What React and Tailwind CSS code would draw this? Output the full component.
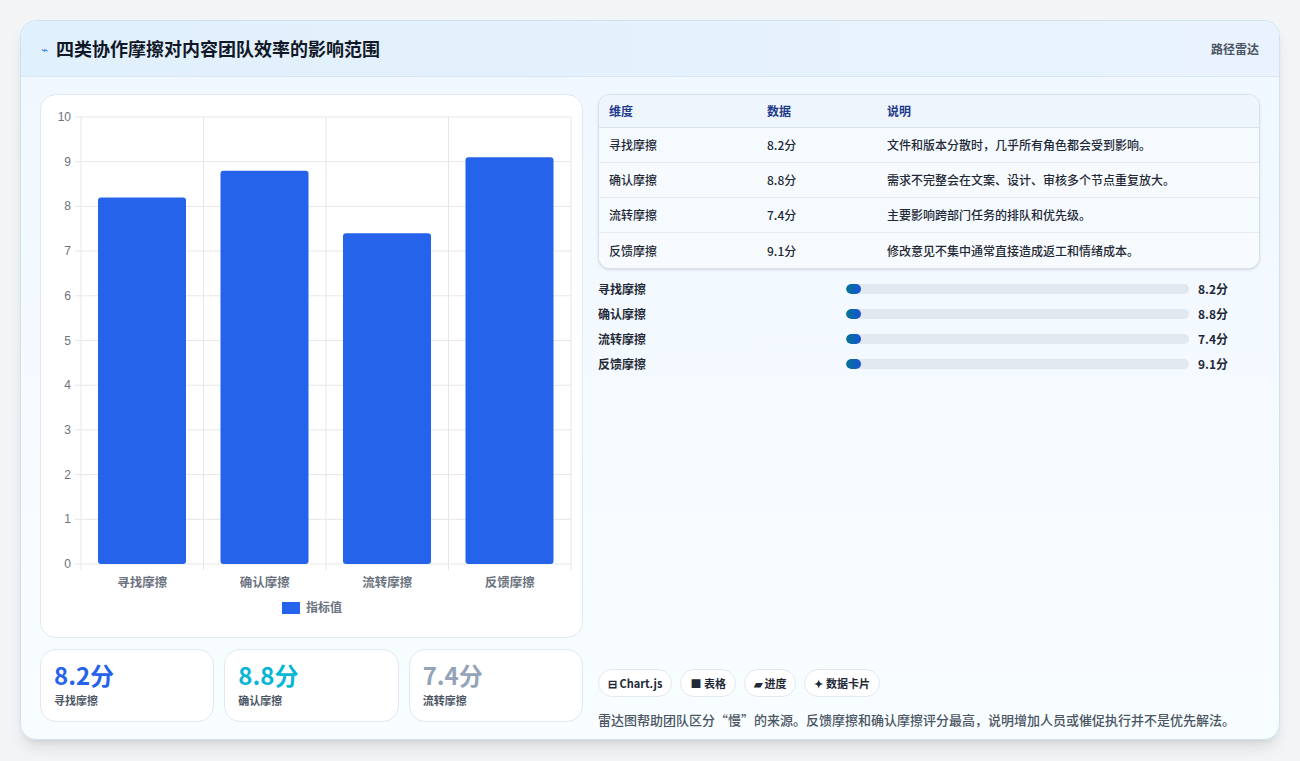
const font = { fontFamily: '"Noto Sans CJK SC", "Liberation Sans", sans-serif' };

const rows = [
  { name: "寻找摩擦", v: 8.2, note: "文件和版本分散时，几乎所有角色都会受到影响。" },
  { name: "确认摩擦", v: 8.8, note: "需求不完整会在文案、设计、审核多个节点重复放大。" },
  { name: "流转摩擦", v: 7.4, note: "主要影响跨部门任务的排队和优先级。" },
  { name: "反馈摩擦", v: 9.1, note: "修改意见不集中通常直接造成返工和情绪成本。" },
];

function Chart() {
  // plot area in svg coords: x 40..530, y 22..469 (panel at 40,93)
  const x0 = 40, x1 = 530, y0 = 22, y1 = 469;
  const yFor = (v) => y1 - ((y1 - y0) * v) / 10;
  const cw = (x1 - x0) / 4;
  return (
    <svg width="542" height="543" className="block">
      {Array.from({ length: 11 }).map((_, i) => (
        <g key={i}>
          <line x1={x0 - 6} x2={x1} y1={yFor(i)} y2={yFor(i)} stroke="#e5e7eb" />
          <text x={x0 - 10} y={yFor(i) + 4} textAnchor="end" fontSize="12" fill="#6b7280" fontFamily="Liberation Sans, sans-serif">{i}</text>
        </g>
      ))}
      {[0, 1, 2, 3, 4].map((i) => (
        <line key={i} x1={x0 + cw * i} x2={x0 + cw * i} y1={y0} y2={y1 + 6} stroke="#e5e7eb" />
      ))}
      {rows.map((r, i) => (
        <g key={r.name}>
          <rect x={x0 + cw * i + 17} y={yFor(r.v)} width="88" height={y1 - yFor(r.v)} rx="3" fill="#2563eb" />
          <text x={x0 + cw * i + cw / 2} y={y1 + 23} textAnchor="middle" fontSize="12.5" fontWeight="600" fill="#6b7280" style={font}>{r.name}</text>
        </g>
      ))}
      <rect x="241" y="507" width="18" height="12" fill="#2563eb" />
      <text x="265" y="517" fontSize="12" fontWeight="600" fill="#6b7280" style={font}>指标值</text>
    </svg>
  );
}

export default function App() {
  return (
    <div style={font} className="w-[1300px] h-[761px] bg-[#f3f4f6] pt-[20px] px-[20px]">
      <div className="h-[720px] rounded-2xl border border-[#cfe3ef] bg-gradient-to-b from-[#f0f7ff] to-[#f8fdff] shadow-lg overflow-hidden flex flex-col">
        <div className="h-[56px] flex items-center justify-between px-5 bg-gradient-to-r from-[#e0f0fc] to-[#eaf3fd] border-b border-[#d6e6f3]">
          <div className="flex items-center gap-2">
            <span className="text-[#3b82f6] text-xs">⌁</span>
            <span className="text-[18px] font-bold text-[#111827]">四类协作摩擦对内容团队效率的影响范围</span>
          </div>
          <span className="text-[12px] font-semibold text-[#4b5563]">路径雷达</span>
        </div>
        <div className="flex gap-[15px] px-[19px] pt-[17px]">
          <div className="w-[543px] flex flex-col gap-[11px]">
            <div className="h-[544px] bg-white rounded-2xl border border-[#e2e8f0]">
              <Chart />
            </div>
            <div className="flex gap-[10px]">
              {[["8.2分", "text-[#2563eb]", "寻找摩擦"], ["8.8分", "text-[#06b6d4]", "确认摩擦"], ["7.4分", "text-[#94a3b8]", "流转摩擦"]].map(([v, c, l]) => (
                <div key={l} className="flex-1 h-[73px] rounded-2xl border border-[#e2e8f0] bg-white px-[13px] pt-[10px]">
                  <div className={`text-[24px] font-bold leading-[30px] ${c}`}>{v}</div>
                  <div className="text-[11px] font-semibold text-[#4b5563] mt-[2px]">{l}</div>
                </div>
              ))}
            </div>
          </div>
          <div className="flex-1 flex flex-col">
            <div className="rounded-xl border border-[#d6e2ee] bg-white overflow-hidden shadow-sm">
              <div className="flex h-[33px] items-center bg-[#eef5fd] border-b border-[#d6e2ee] text-[12px] font-semibold text-[#1e3a8a] px-[10px]">
                <span className="w-[158px]">维度</span><span className="w-[120px]">数据</span><span>说明</span>
              </div>
              {rows.map((r, i) => (
                <div key={r.name} className={`flex h-[35px] items-center px-[10px] text-[12px] font-medium text-[#1f2937] ${i % 2 === 0 ? "bg-[#f5faff]" : "bg-[#f8fbfd]"} ${i < 3 ? "border-b border-[#e5ebf1]" : ""}`}>
                  <span className="w-[158px]">{r.name}</span><span className="w-[120px]">{r.v}分</span><span>{r.note}</span>
                </div>
              ))}
            </div>
            <div className="flex flex-col gap-[8px] mt-[11px]">
              {rows.map((r) => (
                <div key={r.name} className="flex items-center h-[17px] text-[12px] font-semibold text-[#1f2937]">
                  <span className="w-[248px]">{r.name}</span>
                  <div className="w-[343px] h-[10px] rounded-full bg-[#e2e8f0] overflow-hidden">
                    <div className="h-full w-[15px] rounded-full bg-gradient-to-r from-[#0e7490] to-[#1d4ed8]" />
                  </div>
                  <span className="ml-[9px] font-bold">{r.v}分</span>
                </div>
              ))}
            </div>
            <div className="flex gap-[8px] mt-[297px]">
              {["⊟ Chart.js", "■ 表格", "▰ 进度", "✦ 数据卡片"].map((t) => (
                <span key={t} className="h-[28px] px-[9px] flex items-center rounded-full border border-[#e2e8f0] bg-white text-[11px] font-semibold text-[#1f2937]">{t}</span>
              ))}
            </div>
            <div className="mt-[13px] text-[13px] font-medium text-[#4b5563]">雷达图帮助团队区分“慢”的来源。反馈摩擦和确认摩擦评分最高，说明增加人员或催促执行并不是优先解法。</div>
          </div>
        </div>
      </div>
    </div>
  );
}
